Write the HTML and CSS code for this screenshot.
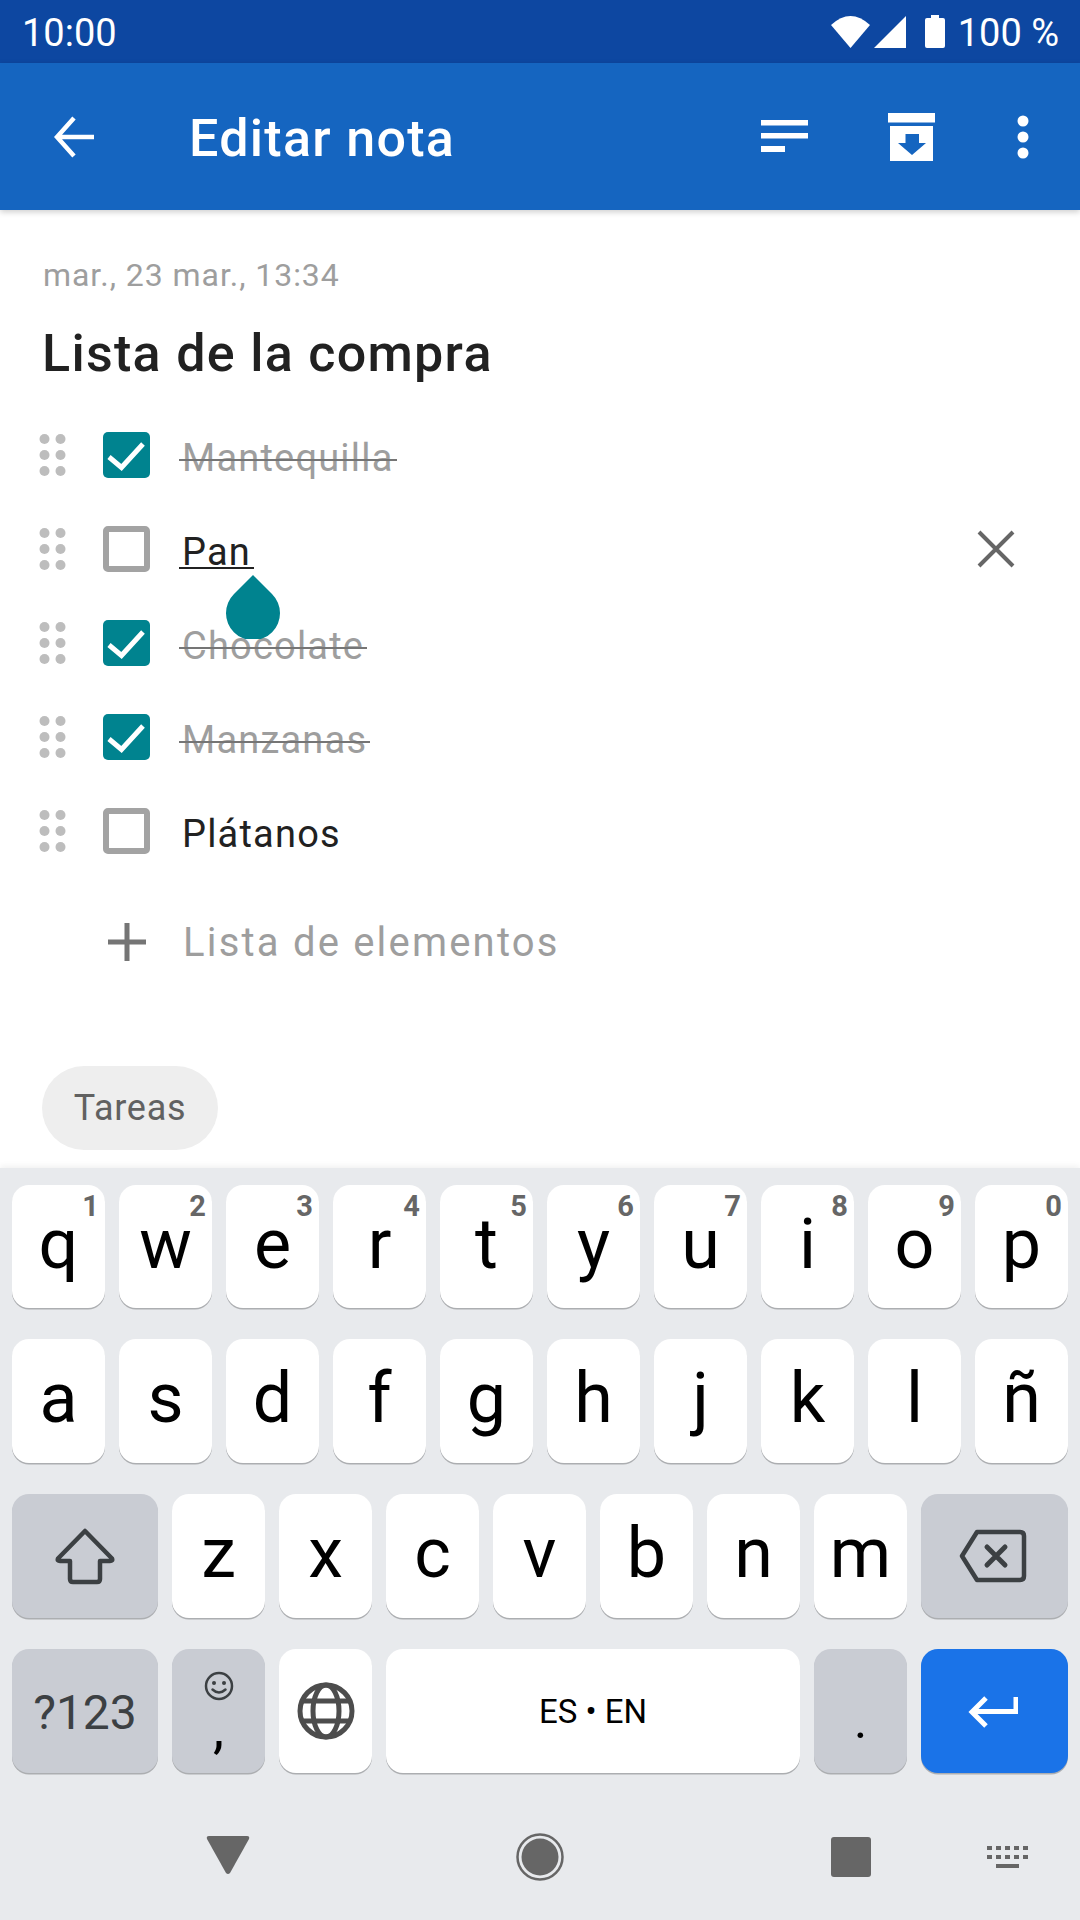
FILE: index.html
```html
<!DOCTYPE html>
<html>
<head>
    <title>Editar nota</title>
    <link rel="stylesheet" href="styles.css">
</head>
<body>
    <svg class="defs" width="0" height="0">
        <symbol id="dots" viewBox="0 0 28 42">
            <circle cx="5.5" cy="5" r="5"/><circle cx="21.5" cy="5" r="5"/>
            <circle cx="5.5" cy="21" r="5"/><circle cx="21.5" cy="21" r="5"/>
            <circle cx="5.5" cy="37" r="5"/><circle cx="21.5" cy="37" r="5"/>
        </symbol>
        <symbol id="check" viewBox="0 0 47 46">
            <path d="M6 25 18.5 35.500 40 12" fill="none" stroke="#fff" stroke-width="5"/>
        </symbol>
    </svg>

    <div class="page">
        <div class="statusbar">
            <span class="clock">10:00</span>
            <div class="status-icons">
                <svg width="39" height="32" viewBox="0 0 39 32"><path d="M0 9Q19.500-9 39 9L19.500 32Z" fill="#fff"/></svg>
                <svg class="signal" width="32" height="32" viewBox="0 0 32 32"><path d="M32 0V32H0Z" fill="#fff"/></svg>
                <svg class="battery" width="20" height="33" viewBox="0 0 20 33"><path d="M6 0H14V3H18Q20 3 20 5V31Q20 33 18 33H2Q0 33 0 31V5Q0 3 2 3H6Z" fill="#fff"/></svg>
                <span class="battery-text">100 %</span>
            </div>
        </div>

        <div class="appbar">
            <svg class="back" width="40" height="42" viewBox="0 0 40 42"><path d="M40 21H4M20 2 3 21 20 40" fill="none" stroke="#fff" stroke-width="4.500"/></svg>
            <h1 class="appbar-title">Editar nota</h1>
            <svg class="sort" width="47" height="32" viewBox="0 0 47 32"><path d="M0 0H47V5.500H0ZM0 13H47V18.500H0ZM0 26H24V32H0Z" fill="#fff"/></svg>
            <svg class="archive" width="47" height="48" viewBox="0 0 47 48"><path d="M0 0H47V9.500H0ZM2 13H45V48H2ZM17.500 21V30H10L24 42 38 30H31V21Z" fill="#fff" fill-rule="evenodd"/></svg>
            <svg class="more" width="12" height="44" viewBox="0 0 12 44"><circle cx="6" cy="6" r="5.500" fill="#fff"/><circle cx="6" cy="22" r="5.500" fill="#fff"/><circle cx="6" cy="38" r="5.500" fill="#fff"/></svg>
        </div>

        <div class="note">
            <div class="note-date">mar., 23 mar., 13:34</div>
            <div class="note-title">Lista de la compra</div>

            <div class="checklist">
                <div class="item">
                    <svg class="drag"><use href="#dots"/></svg>
                    <span class="box checked"><svg width="47" height="46"><use href="#check"/></svg></span>
                    <span class="item-text done">Mantequilla</span>
                </div>
                <div class="item">
                    <svg class="drag"><use href="#dots"/></svg>
                    <span class="box"></span>
                    <span class="item-text editing">Pan</span>
                    <svg class="remove" width="40" height="40" viewBox="0 0 40 40"><path d="M3 3 37 37M37 3 3 37" stroke="#666" stroke-width="4"/></svg>
                </div>
                <div class="item">
                    <svg class="drag"><use href="#dots"/></svg>
                    <span class="box checked"><svg width="47" height="46"><use href="#check"/></svg></span>
                    <span class="item-text done">Chocolate</span>
                </div>
                <div class="item">
                    <svg class="drag"><use href="#dots"/></svg>
                    <span class="box checked"><svg width="47" height="46"><use href="#check"/></svg></span>
                    <span class="item-text done">Manzanas</span>
                </div>
                <div class="item">
                    <svg class="drag"><use href="#dots"/></svg>
                    <span class="box"></span>
                    <span class="item-text">Plátanos</span>
                </div>
            </div>

            <div class="add-item">
                <svg width="38" height="38" viewBox="0 0 38 38"><path d="M0 19H38M19 0V38" stroke="#757575" stroke-width="5"/></svg>
                <span>Lista de elementos</span>
            </div>

            <span class="chip">Tareas</span>

            <!-- selection handle under Pan -->
            <svg class="handle" width="54" height="64" viewBox="0 0 54 64"><path d="M27 0 46 19A27 27 0 1 1 8 19Z" fill="#00838f"/></svg>
        </div>

        <div class="keyboard">
            <div class="kb-row">
                <div class="key">q<sup>1</sup></div>
                <div class="key">w<sup>2</sup></div>
                <div class="key">e<sup>3</sup></div>
                <div class="key">r<sup>4</sup></div>
                <div class="key">t<sup>5</sup></div>
                <div class="key">y<sup>6</sup></div>
                <div class="key">u<sup>7</sup></div>
                <div class="key">i<sup>8</sup></div>
                <div class="key">o<sup>9</sup></div>
                <div class="key">p<sup>0</sup></div>
            </div>
            <div class="kb-row">
                <div class="key">a</div>
                <div class="key">s</div>
                <div class="key">d</div>
                <div class="key">f</div>
                <div class="key">g</div>
                <div class="key">h</div>
                <div class="key">j</div>
                <div class="key">k</div>
                <div class="key">l</div>
                <div class="key">ñ</div>
            </div>
            <div class="kb-row">
                <div class="key wide fn icon-key">
                    <svg width="60" height="57" viewBox="0 0 60 57"><path d="M30 3 57 30.500Q58 33 55 33H45V51Q45 54 42 54H18Q15 54 15 51V33H5Q2 33 3 30.500Z" fill="none" stroke="#3c4043" stroke-width="4.500" stroke-linejoin="round"/></svg>
                </div>
                <div class="key">z</div>
                <div class="key">x</div>
                <div class="key">c</div>
                <div class="key">v</div>
                <div class="key">b</div>
                <div class="key">n</div>
                <div class="key">m</div>
                <div class="key wide fn icon-key">
                    <svg class="icon-left" width="68" height="54" viewBox="0 0 68 54"><path d="M18 3H61Q65 3 65 7V47Q65 51 61 51H18L3 27Z" fill="none" stroke="#3c4043" stroke-width="4.500" stroke-linejoin="round"/><path d="M28 18 46 36M46 18 28 36" stroke="#3c4043" stroke-width="5" stroke-linecap="round"/></svg>
                </div>
            </div>
            <div class="kb-row">
                <div class="key wide fn symbols">?123</div>
                <div class="key fn emoji-comma">
                    <svg width="30" height="30" viewBox="0 0 30 30"><circle cx="15" cy="15" r="13" fill="none" stroke="#3c4043" stroke-width="2.500"/><circle cx="10" cy="12" r="2" fill="#3c4043"/><circle cx="20" cy="12" r="2" fill="#3c4043"/><path d="M8.500 18.500Q15 24.500 21.500 18.500" fill="none" stroke="#3c4043" stroke-width="2.500" stroke-linecap="round"/></svg>
                    <span>,</span>
                </div>
                <div class="key icon-key">
                    <svg width="58" height="58" viewBox="0 0 58 58" fill="none" stroke="#4d4d4d" stroke-width="5"><circle cx="29" cy="29" r="26"/><ellipse cx="29" cy="29" rx="13" ry="26"/><path d="M5 19H53M5 39H53"/></svg>
                </div>
                <div class="key space">ES • EN</div>
                <div class="key fn period">.</div>
                <div class="key wide enter">
                    <svg class="icon-left" width="50" height="32" viewBox="0 0 50 32"><path d="M48 1V15.500H5M18 2 4 16 18 30" fill="none" stroke="#fff" stroke-width="5"/></svg>
                </div>
            </div>

            <div class="navbar">
                <svg class="nav-back" width="44" height="40" viewBox="0 0 44 40"><path d="M3 1H41Q44 1 43 4L24 38Q22 40 20 38L1 4Q0 1 3 1Z" fill="#666"/></svg>
                <svg class="nav-home" width="48" height="48" viewBox="0 0 48 48"><circle cx="24" cy="24" r="22.500" fill="none" stroke="#666" stroke-width="2.500"/><circle cx="24" cy="24" r="18.500" fill="#666"/></svg>
                <svg class="nav-recent" width="40" height="40" viewBox="0 0 40 40"><rect width="40" height="40" rx="3" fill="#666"/></svg>
                <svg class="nav-kb" width="41" height="22" viewBox="0 0 41 22" fill="#666"><path d="M0 0H5V4H0ZM9 0H14V4H9ZM18 0H23V4H18ZM27 0H32V4H27ZM36 0H41V4H36ZM0 9H5V13H0ZM9 9H14V13H9ZM18 9H23V13H18ZM27 9H32V13H27ZM36 9H41V13H36ZM9 18H32V22H9Z"/></svg>
            </div>
        </div>
    </div>
</body>
</html>
```

FILE: styles.css
```css
* {
    box-sizing: border-box;
}
body {
    margin: 0;
    background-color: #fff;
    font-family: Roboto, "Noto Sans", sans-serif;
}
.defs {
    position: absolute;
}
.page {
    display: flex;
    flex-direction: column;
    width: 1080px;
    height: 1920px;
    overflow: hidden;
}

/* status bar */
.statusbar {
    display: flex;
    justify-content: space-between;
    align-items: center;
    flex: none;
    height: 63px;
    padding: 0 21px 0 22px;
    background-color: #0d47a1;
    color: #fff;
    font-size: 38px;
}
.clock {
    padding-top: 2px;
}
.status-icons {
    display: flex;
    align-items: center;
}
.signal {
    margin-left: 4px;
}
.battery {
    margin-left: 19px;
}
.battery-text {
    margin-left: 13px;
    padding-top: 2px;
}

/* app bar */
.appbar {
    display: flex;
    align-items: center;
    flex: none;
    position: relative;
    height: 147px;
    padding-left: 54px;
    background-color: #1565c0;
    box-shadow: 0 2px 6px rgba(0,0,0,0.2);
}
.appbar-title {
    flex: 1;
    margin: 4px 0 0 95px;
    color: #fff;
    font-size: 52px;
    font-weight: 500;
    letter-spacing: 1.3px;
}
.sort {
    margin-right: 80px;
    margin-top: -2px;
}
.archive {
    margin-right: 82px;
}
.more {
    margin-right: 51px;
}

/* note */
.note {
    flex: 1;
    position: relative;
    padding-top: 47px;
}
.note-date {
    margin-left: 43px;
    color: #9e9e9e;
    font-size: 32px;
    letter-spacing: 0.95px;
    line-height: 36px;
}
.note-title {
    margin: 31px 0 0 42px;
    color: #212121;
    font-size: 52px;
    font-weight: 500;
    letter-spacing: 1.3px;
    line-height: 60px;
}
.checklist {
    margin-top: 24px;
}
.item {
    display: flex;
    align-items: center;
    height: 94px;
    padding-left: 39px;
}
.drag {
    width: 28px;
    height: 42px;
    fill: #bdbdbd;
}
.box {
    flex: none;
    width: 47px;
    height: 46px;
    margin-left: 36px;
    border: 6px solid #a3a3a3;
    border-radius: 5px;
}
.box.checked {
    border: none;
    background-color: #00838f;
}
.box svg {
    display: block;
}
.item-text {
    position: relative;
    margin: 5px 0 0 29px;
    padding: 0 3px;
    color: #212121;
    font-size: 38px;
    letter-spacing: 1.2px;
}
.item-text.done {
    color: #9e9e9e;
}
.item-text.done::after {
    content: "";
    position: absolute;
    left: 0;
    right: 0;
    top: 23px;
    height: 2px;
    background-color: #757575;
}
.item-text.editing::after {
    content: "";
    position: absolute;
    left: 0;
    right: 0;
    bottom: 5px;
    height: 2px;
    background-color: #212121;
}
.remove {
    margin-left: auto;
    margin-right: 64px;
}
.add-item {
    display: flex;
    align-items: center;
    height: 94px;
    margin-top: 17px;
    padding-left: 108px;
    color: #9e9e9e;
    font-size: 40px;
    letter-spacing: 2.2px;
}
.add-item span {
    margin-left: 37px;
}
.chip {
    display: inline-block;
    margin: 77px 0 0 42px;
    width: 176px;
    height: 84px;
    border-radius: 42px;
    background-color: #eee;
    color: #616161;
    font-size: 36px;
    letter-spacing: 0.7px;
    line-height: 84px;
    text-align: center;
}
.handle {
    position: absolute;
    left: 226px;
    top: 365px;
}

/* keyboard */
.keyboard {
    flex: none;
    position: relative;
    height: 752px;
    padding: 17px 12px 0;
    background-color: #e8eaed;
    box-shadow: 0 -2px 6px rgba(0,0,0,0.06);
}
.kb-row {
    display: flex;
    gap: 14px;
    height: 124px;
    margin-bottom: 31px;
}
.kb-row:first-child {
    height: 123px;
}
.key {
    display: flex;
    justify-content: center;
    align-items: center;
    position: relative;
    flex: none;
    width: 93px;
    padding-bottom: 6px;
    border-radius: 17px;
    background-color: #fff;
    box-shadow: 0 1.5px 0 #acaeb1;
    color: #000;
    font-size: 70px;
}
.key sup {
    position: absolute;
    top: 5px;
    right: 6px;
    color: #666;
    font-size: 29px;
    font-weight: 700;
    line-height: 32px;
}
.key.wide {
    width: 146px;
}
.key.wide:last-child {
    width: 147px;
}
.key.fn {
    background-color: #c9ccd3;
}
.key.icon-key {
    padding-bottom: 0;
}
.key.enter {
    padding: 2px 0 0;
    background-color: #1a73e8;
}
.icon-left {
    margin-right: 4px;
}
.key.symbols {
    padding: 2px 0 0;
    color: #3c4043;
    font-size: 48px;
}
.key.emoji-comma {
    flex-direction: column;
    justify-content: flex-start;
    padding: 22px 0 0;
    font-size: 56px;
    line-height: 54px;
}
.key.space {
    width: 414px;
    font-size: 33px;
    padding-bottom: 0;
}
.key.period {
    font-size: 50px;
    padding-top: 26px;
}
.navbar {
    display: flex;
    align-items: center;
    position: relative;
    height: 120px;
    margin-top: -7px;
}
.nav-back {
    margin-left: 194px;
    margin-top: -4px;
}
.nav-home {
    margin-left: 266px;
}
.nav-recent {
    margin-left: 267px;
}
.nav-kb {
    margin-left: 116px;
}
```
